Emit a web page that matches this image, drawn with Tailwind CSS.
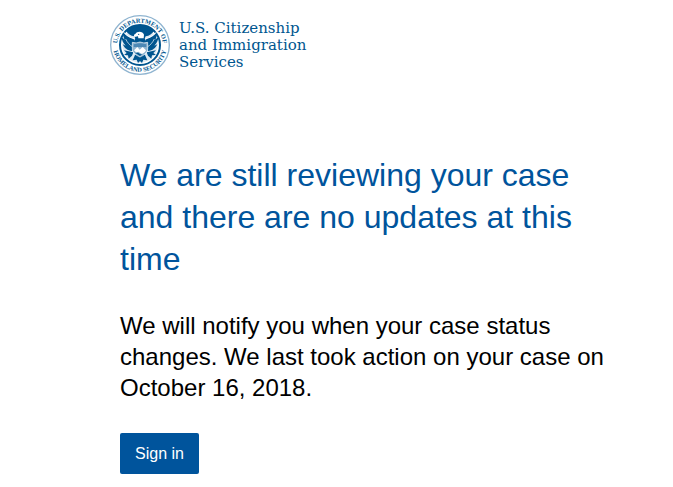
<!DOCTYPE html>
<html lang="en">

<head>
    <meta charset="UTF-8">
    <meta name="viewport" content="width=device-width, initial-scale=1.0">
    <script src="https://cdn.jsdelivr.net/npm/@tailwindcss/browser@4"></script>
    <title>Case Status</title>
</head>

<body class="bg-white font-['Liberation_Sans',Arial,sans-serif] text-black">
    <header class="pt-[14px] pl-[109px]">
        <a href="#" class="inline-flex items-center gap-2 text-[#00568f]">
            <svg class="size-[62px] shrink-0" viewBox="-93 -93 186 186" role="img" aria-label="U.S. Department of Homeland Security seal">
                <defs>
                    <path id="topArc" d="M-68 14A69 69 0 1 1 68 14" />
                    <path id="bottomArc" d="M-80 12A81 81 0 0 0 80 12" />
                </defs>
                <circle r="88" fill="#fff" stroke="#8fb4d0" stroke-width="4" />
                <g fill="#00568f" font-family="'Liberation Serif', serif" font-weight="bold" font-size="19" text-anchor="middle">
                    <text><textPath href="#topArc" startOffset="50%">U.S. DEPARTMENT OF</textPath></text>
                    <text><textPath href="#bottomArc" startOffset="50%">HOMELAND SECURITY</textPath></text>
                </g>
                <circle r="60" fill="#fff" stroke="#00558f" stroke-width="6" />
                <circle r="53" fill="#dce9f2" />
                <!-- wings -->
                <g fill="#00558f">
                    <path d="M-50-38C-42-29-34-22-20-19L-13-8-17 8-24 18C-38 17-47 9-52-2L-43 2C-51-7-55-15-55-25L-46-16C-50-24-52-30-50-38Z" />
                    <path d="M50-38C42-29 34-22 20-19L13-8 17 8 24 18C38 17 47 9 52-2L43 2C51-7 55-15 55-25L46-16C50-24 52-30 50-38Z" />
                    <!-- sky behind the head -->
                    <path d="M-43-43A61 61 0 0 1 43-43C36-34 28-28 17-26L12-15H-12L-17-26C-28-28-36-34-43-43Z" />
                    <!-- body and tail -->
                    <path d="M-14-20H14L21-4H-21Z" />
                    <path d="M-14 28L-22 46-10 44-6 54 0 48 6 54 10 44 22 46 14 28Z" />
                    <!-- olive branch and arrows -->
                    <path d="M-20 22L-48 16-40 24-48 30-36 31-34 41-24 32Z" />
                    <path d="M20 22L48 16 40 24 48 30 36 31 34 41 24 32Z" />
                </g>
                <!-- head -->
                <path d="M-14-33C-9-43 9-42 12-31L11-20H-5L-6-26-17-24C-19-29-18-32-14-33Z" fill="#fff" />
                <circle cx="-4" cy="-32" r="2" fill="#00558f" />
                <g fill="none" stroke="#fff" stroke-width="3">
                    <path d="M-50-39C-39-27-30-22-17-19M50-39C39-27 30-22 17-19" />
                    <path d="M-43-18C-37-6-31 0-23 5M43-18C37-6 31 0 23 5" stroke-width="2" />
                </g>
                <!-- shield -->
                <path d="M-23-8Q-11-4 0-9Q11-4 23-8V12C23 24 11 31 0 36C-11 31-23 24-23 12Z" fill="#8fb4d0" stroke="#fff" stroke-width="2" />
                <path d="M-19-2Q0-8 19-2V6H-19Z" fill="#4d88b4" />
                <path d="M-18 16L-8 6-1 14 8 6 18 16C16 22 11 25 6 27L-5 20-10 24Z" fill="#fff" />
                <path d="M-14 24Q-8 20-3 25T8 26L0 33Z" fill="#00558f" />
            </svg>
            <span class="font-['DejaVu_Serif',serif] text-[15px] leading-[17px]">U.S. Citizenship<br>and Immigration<br>Services</span>
        </a>
    </header>

    <main class="mr-14 ml-[120px] pt-[71px]">
        <h1 class="text-[32px] leading-[42px] text-[#00549c]">We are still reviewing your case and there are no updates at this time</h1>
        <p class="mt-[30px] text-2xl leading-[31px]">We will notify you when your case status changes. We last took action on your case on October 16, 2018.</p>
        <button type="button" class="mt-[30px] cursor-pointer rounded-xs bg-[#00549c] px-[15px] py-2 text-base leading-[25px] text-white hover:bg-[#004179]">Sign in</button>
    </main>
</body>

</html>
